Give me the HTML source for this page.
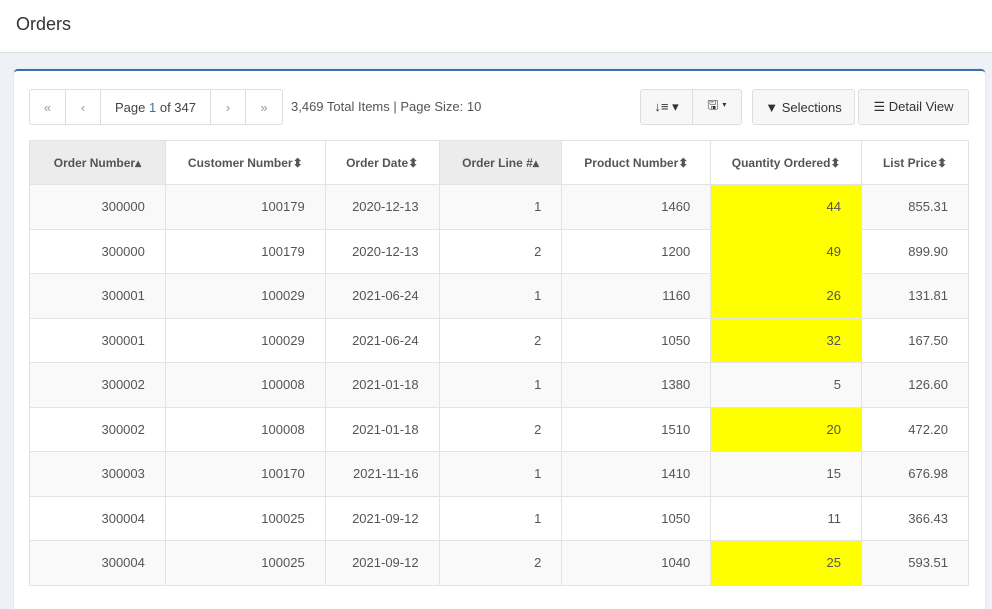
<!DOCTYPE html>
<html><head><style>
*{box-sizing:border-box;margin:0;padding:0}
body{width:992px;height:585px;overflow:hidden;background:#eef1f5;font-family:"Liberation Sans",sans-serif;color:#444;font-size:13px}
.hdr{height:53px;background:#fff;border-bottom:1px solid #dcdfe3;padding:14px 16px;font-size:18px;color:#333}
.panel{position:absolute;left:14px;top:69px;width:971px;height:540px;background:#fff;border-top:2px solid #3c6eaa;border-radius:4px 4px 0 0;box-shadow:0 0 1px #bbb}
.pg{position:absolute;left:15px;top:18px;height:36px;display:flex;border:1px solid #ddd;border-radius:3px}
.pg div{border-right:1px solid #ddd;display:flex;align-items:center;justify-content:center;color:#999;font-size:13px}
.pg div:last-child{border-right:none}
.info{position:absolute;left:277px;top:28px;color:#555}
.btn{position:absolute;top:18px;height:36px;background:#f7f7f7;border:1px solid #ddd;border-radius:3px;display:flex;align-items:center;justify-content:center;color:#333;font-size:13px}
table{position:absolute;left:15px;top:69px;border-collapse:collapse;width:940px}
td,th{border:1px solid #e3e3e3;text-align:right;padding:0 20px;height:44.5px;color:#555;font-weight:normal}
th{text-align:center;font-weight:bold;color:#555;font-size:12px;padding:0 8px;height:44px}
th.s{background:#ececec}
tr:nth-child(even) td{background:#f9f9f9}
td.y{background:#ffff00!important}
</style></head><body>
<div class="hdr">Orders</div>
<div class="panel">
<div class="pg">
<div style="width:36px">«</div><div style="width:35px">‹</div><div style="width:110px;color:#444">Page <span style="color:#3c6eaa">&nbsp;1&nbsp;</span> of 347</div><div style="width:35px">›</div><div style="width:36px">»</div>
</div>
<div class="info">3,469 Total Items | Page Size: 10</div>
<div class="btn" style="left:626px;width:53px;border-radius:3px 0 0 3px">↓≡ ▾</div>
<div class="btn" style="left:678px;width:50px;border-radius:0 3px 3px 0">🖫 ▾</div>
<div class="btn" style="left:738px;width:103px">▼ Selections</div>
<div class="btn" style="left:844px;width:111px">☰ Detail View</div>
<table>
<colgroup><col style="width:136px"><col style="width:160px"><col style="width:114px"><col style="width:123px"><col style="width:149px"><col style="width:151px"><col style="width:107px"></colgroup>
<tr><th class="s">Order Number▴</th><th>Customer Number⬍</th><th>Order Date⬍</th><th class="s">Order Line #▴</th><th>Product Number⬍</th><th>Quantity Ordered⬍</th><th>List Price⬍</th></tr>
<tr><td>300000</td><td>100179</td><td>2020-12-13</td><td>1</td><td>1460</td><td class="y">44</td><td>855.31</td></tr>
<tr><td>300000</td><td>100179</td><td>2020-12-13</td><td>2</td><td>1200</td><td class="y">49</td><td>899.90</td></tr>
<tr><td>300001</td><td>100029</td><td>2021-06-24</td><td>1</td><td>1160</td><td class="y">26</td><td>131.81</td></tr>
<tr><td>300001</td><td>100029</td><td>2021-06-24</td><td>2</td><td>1050</td><td class="y">32</td><td>167.50</td></tr>
<tr><td>300002</td><td>100008</td><td>2021-01-18</td><td>1</td><td>1380</td><td>5</td><td>126.60</td></tr>
<tr><td>300002</td><td>100008</td><td>2021-01-18</td><td>2</td><td>1510</td><td class="y">20</td><td>472.20</td></tr>
<tr><td>300003</td><td>100170</td><td>2021-11-16</td><td>1</td><td>1410</td><td>15</td><td>676.98</td></tr>
<tr><td>300004</td><td>100025</td><td>2021-09-12</td><td>1</td><td>1050</td><td>11</td><td>366.43</td></tr>
<tr><td>300004</td><td>100025</td><td>2021-09-12</td><td>2</td><td>1040</td><td class="y">25</td><td>593.51</td></tr>
</table>
</div>
</body></html>
